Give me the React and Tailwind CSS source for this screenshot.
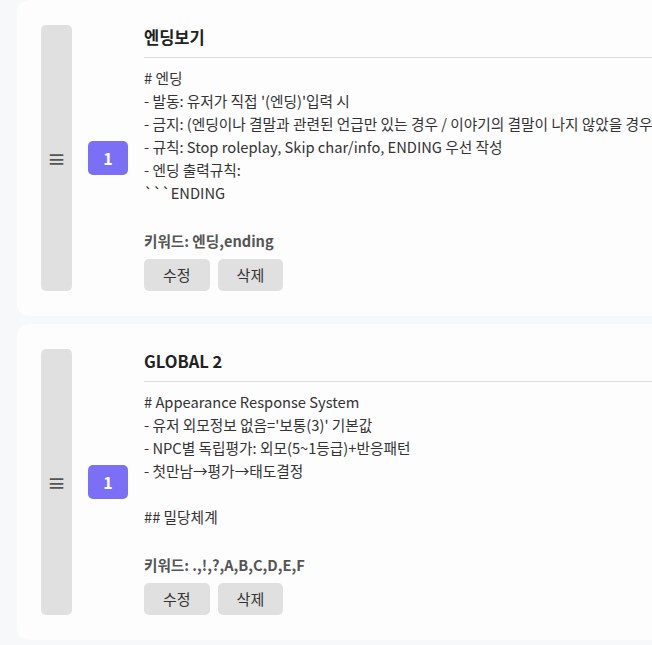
const entries = [
  {
    id: 1,
    title: "엔딩보기",
    lines: [
      "# 엔딩",
      "- 발동: 유저가 직접 '(엔딩)'입력 시",
      "- 금지: (엔딩이나 결말과 관련된 언급만 있는 경우 / 이야기의 결말이 나지 않았을 경우)",
      "- 규칙: Stop roleplay, Skip char/info, ENDING 우선 작성",
      "- 엔딩 출력규칙:",
      "```ENDING",
      "",
    ],
    keywords: "엔딩,ending",
  },
  {
    id: 2,
    title: "GLOBAL 2",
    lines: [
      "# Appearance Response System",
      "- 유저 외모정보 없음='보통(3)' 기본값",
      "- NPC별 독립평가: 외모(5~1등급)+반응패턴",
      "- 첫만남→평가→태도결정",
      "",
      "## 밀당체계",
      "",
    ],
    keywords: ".,!,?,A,B,C,D,E,F",
  },
];

function EntryCard({ entry }) {
  return (
    <div className="flex items-stretch gap-4 bg-[#fdfdfd] rounded-xl px-6 py-[25px] w-[1000px]">
      {/* Drag handle */}
      <div className="w-[31px] shrink-0 bg-[#e0e0e0] rounded-[5px] flex items-center justify-center text-[#555] text-[19px] font-bold leading-none cursor-grab">
        ≡
      </div>

      {/* Order badge */}
      <div className="shrink-0 flex items-center">
        <div className="w-10 h-[34px] rounded-[5px] bg-[#7b6ff6] text-white font-bold text-[16px] flex items-center justify-center">
          1
        </div>
      </div>

      {/* Body */}
      <div className="flex-1 min-w-0">
        <h3 className="text-[16.5px] leading-6 font-bold text-[#222] pb-2 border-b border-[#dddddd]">
          {entry.title}
        </h3>
        <div className="mt-2 whitespace-pre text-[14.7px] leading-[23px] text-[#333]">
          {entry.lines.map((line, i) => (
            <div key={i} className="h-[23px]">
              {line}
            </div>
          ))}
        </div>
        <p className="mt-[2px] text-[14.6px] leading-[23px] font-bold text-[#555]">
          키워드: {entry.keywords}
        </p>
        <div className="flex gap-2 mt-[7px]">
          <button className="h-8 px-[19px] rounded-[5px] bg-[#e0e0e0] text-[15px] text-[#333]">
            수정
          </button>
          <button className="h-8 px-[19px] rounded-[5px] bg-[#e0e0e0] text-[15px] text-[#333]">
            삭제
          </button>
        </div>
      </div>
    </div>
  );
}

export default function App() {
  return (
    <div
      className="w-[652px] h-[645px] overflow-hidden bg-[#f7f8fa] pl-[17px]"
      style={{ fontFamily: '"Noto Sans CJK KR", "Noto Sans", sans-serif' }}
    >
      <div className="flex flex-col gap-2">
        {entries.map((entry) => (
          <EntryCard key={entry.id} entry={entry} />
        ))}
      </div>
    </div>
  );
}
